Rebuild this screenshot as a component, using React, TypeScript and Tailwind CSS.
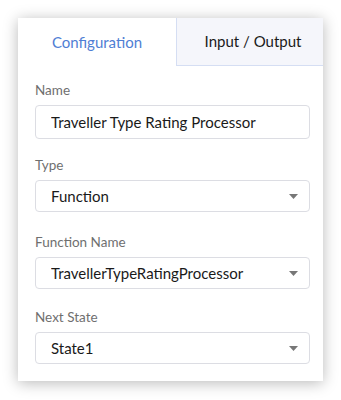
import React from "react";

function Caret() {
  return (
    <svg width="9" height="5" viewBox="0 0 9 5" className="shrink-0">
      <path d="M0 0 L9 0 L4.5 5 Z" fill="#777777" />
    </svg>
  );
}

function Field({ label, value, select, mt, h }: { label: string; value: string; select?: boolean; mt: string; h: string }) {
  return (
    <div className={mt}>
      <div className="text-[13.5px] leading-4 text-[#6f6f6f]">{label}</div>
      <div className={`mt-[7px] ${h} rounded-[4px] border border-[#dcdde3] bg-white flex items-center pl-[15px] pr-[11px]`}>
        <span className="flex-1 text-[15px] text-[#1a1a1a] truncate">{value}</span>
        {select && <Caret />}
      </div>
    </div>
  );
}

export default function App() {
  return (
    <div className="w-[341px] h-[400px] bg-white pt-[18px] pl-[18px]" style={{ fontFamily: "Lato, 'Open Sans', sans-serif" }}>
      <div className="w-[305px] h-[363px] bg-white shadow-[0_2px_14px_rgba(0,0,0,0.28)]">
        <div className="flex h-[48px]">
          <div className="w-[158px] flex items-center justify-center text-[15px] text-[#4f7ed4]">Configuration</div>
          <div className="flex-1 flex items-center justify-center pl-[6px] text-[15px] text-[#1a1a1a] bg-[#f5f6fb] border-l border-b border-[#d5def3]">Input / Output</div>
        </div>
        <div className="pl-[17px] pr-[13px]">
          <Field mt="mt-[16px]" h="h-[34px]" label="Name" value="Traveller Type Rating Processor" />
          <Field mt="mt-[18px]" h="h-[32px]" label="Type" value="Function" select />
          <Field mt="mt-[22px]" h="h-[32px]" label="Function Name" value="TravellerTypeRatingProcessor" select />
          <Field mt="mt-[20px]" h="h-[32px]" label="Next State" value="State1" select />
        </div>
      </div>
    </div>
  );
}
